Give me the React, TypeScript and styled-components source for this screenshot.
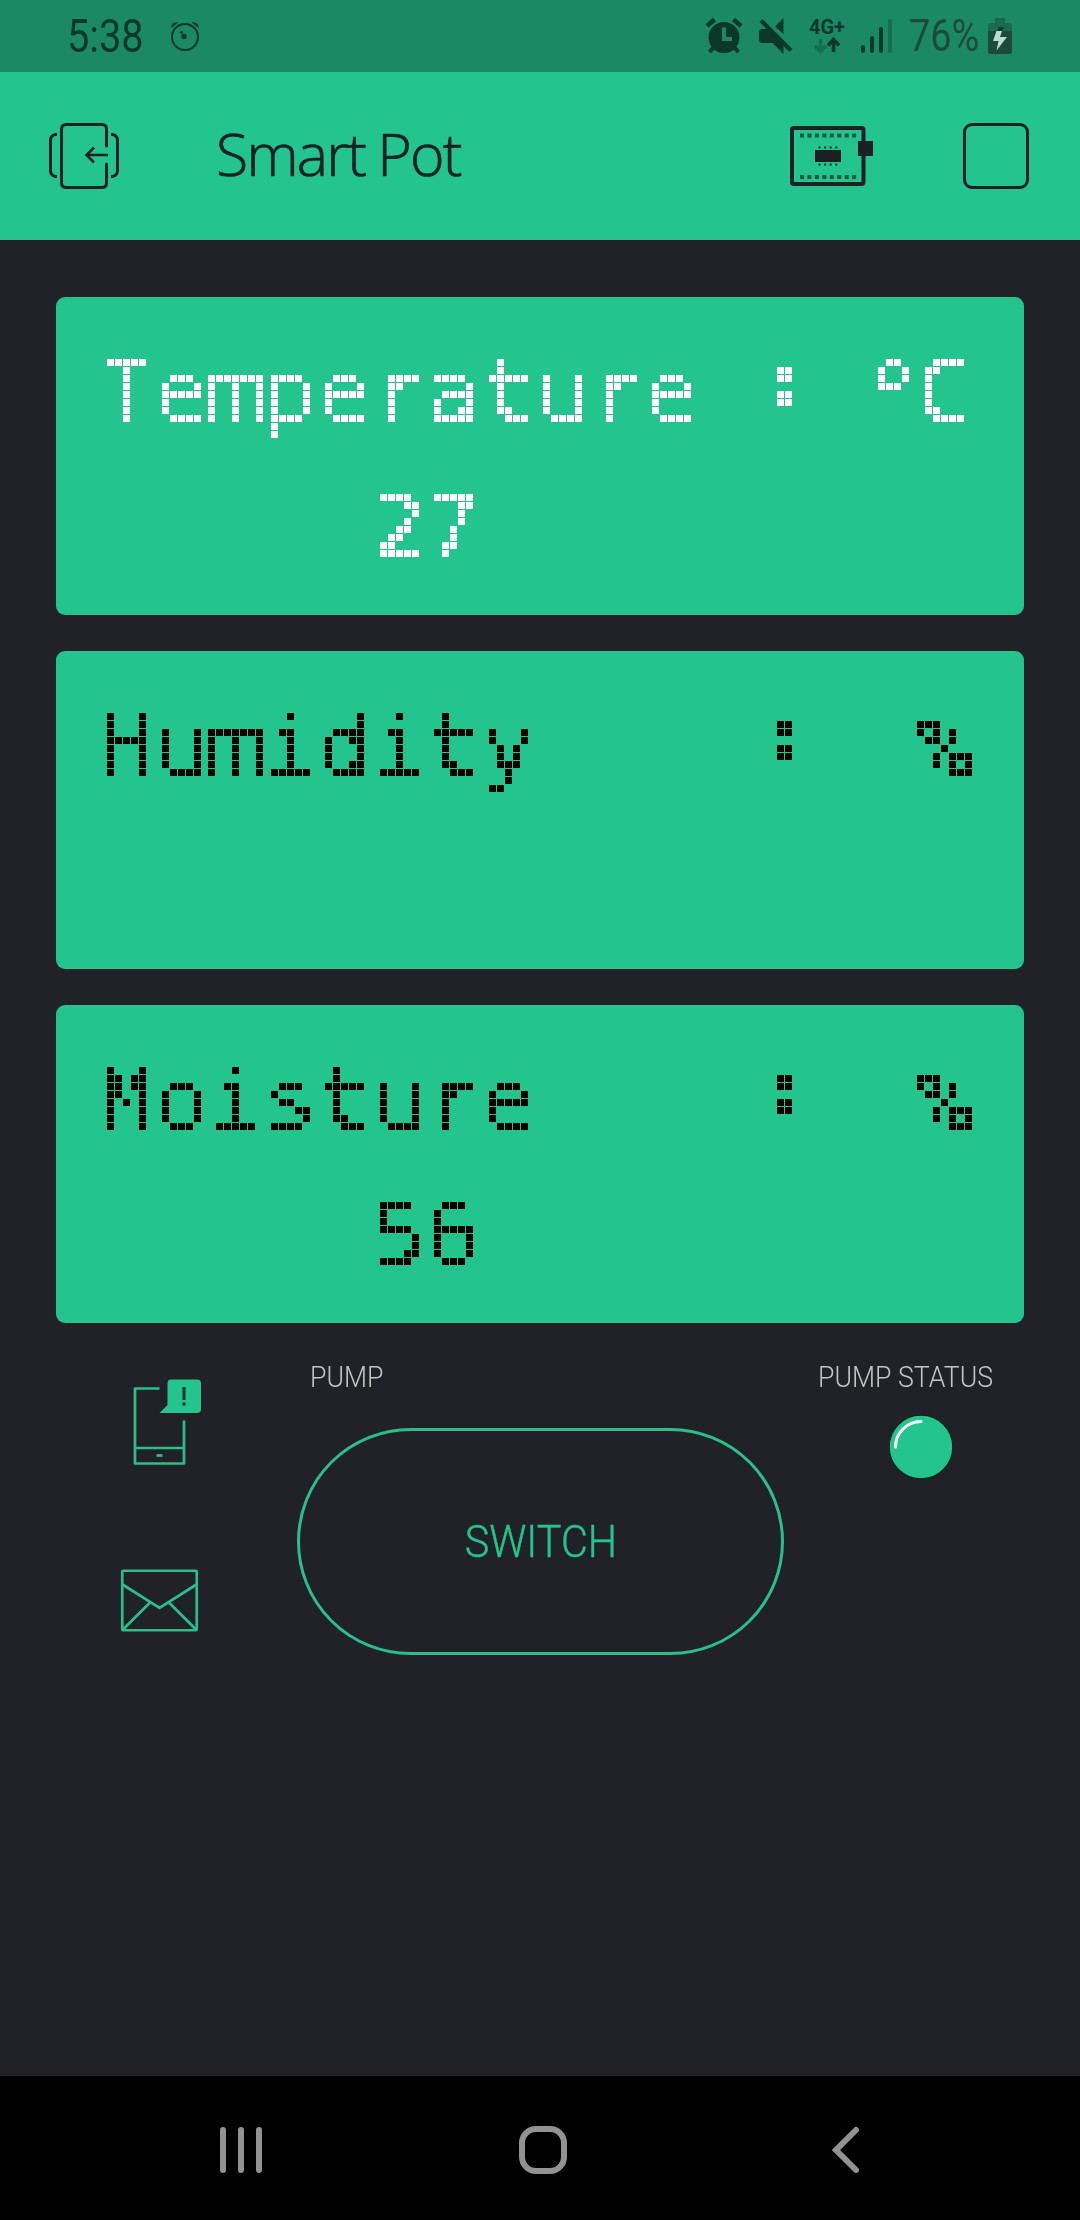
import React from "react";
import styled, { createGlobalStyle } from "styled-components";

const ink = "#1a2023";
const statusInk = "#0b3829";
const green = "#24c48e";
const lineGreen = "#2cbd8d";
const navColor = "#929292";

const GlobalStyle = createGlobalStyle`
  * { box-sizing: border-box; }
  body { margin: 0; background: #212227; }
  svg { display: block; flex: none; overflow: visible; }
`;

const Screen = styled.div`
  width: 1080px;
  height: 2220px;
  display: flex;
  flex-direction: column;
  background: #212227;
  overflow: hidden;
  font-family: Roboto, "Open Sans", sans-serif;
`;

const StatusBar = styled.header`
  height: 72px;
  flex: none;
  display: flex;
  align-items: center;
  padding: 0 68px 0 67px;
  background: #1b8a64;
`;

const Clock = styled.span`
  width: 103px;
  font-size: 46px;
  line-height: 72px;
  color: ${statusInk};
  transform: scaleX(0.865);
  transform-origin: left center;
  white-space: nowrap;
`;

const StatusIcons = styled.div`
  display: flex;
  align-items: center;
  margin-left: auto;
`;

const AlarmSlot = styled.div`
  margin-right: 16px;
`;

const Network = styled.div`
  display: flex;
  flex-direction: column;
  align-items: center;
  width: 36px;
  height: 38px;
  margin: 0 16px 0 16px;
`;

const NetworkLabel = styled.span`
  font-size: 20px;
  font-weight: 700;
  line-height: 20px;
  color: ${statusInk};
`;

const Percent = styled.span`
  width: 79px;
  margin-left: 17px;
  font-size: 44px;
  font-weight: 400;
  line-height: 72px;
  color: #1e4a3b;
  transform: scaleX(0.86);
  transform-origin: left center;
`;

const TitleBar = styled.div`
  height: 168px;
  flex: none;
  display: flex;
  align-items: center;
  padding: 0 51px 0 48px;
  background: ${green};
`;

const Title = styled.h1`
  flex: 1;
  margin: 0 0 6px 96px;
  font-family: "Open Sans", "Noto Sans", sans-serif;
  font-size: 59px;
  font-weight: 300;
  line-height: 80px;
  letter-spacing: -1.8px;
  word-spacing: -1.5px;
  -webkit-text-stroke: 0.7px ${ink};
  color: ${ink};
`;

const TitleActions = styled.div`
  display: flex;
  align-items: center;
  gap: 90px;
`;

const Panels = styled.main`
  display: flex;
  flex-direction: column;
  gap: 36px;
  padding: 57px 56px 0;
`;

const Lcd = styled.section<{ $ink: string }>`
  height: 318px;
  padding: 42px 0 0 44px;
  border-radius: 9px;
  background: ${green};
  color: ${(p) => p.$ink};
`;

const LcdLine = styled.div`
  height: 135px;
  font-family: "DejaVu Sans Mono", monospace;
  font-size: 87px;
  line-height: 106px;
  white-space: pre;
`;

const LcdCell = styled.span<{ $wide: boolean }>`
  display: inline-block;
  vertical-align: top;
  width: 55px;
  height: 106px;
  filter: url(${(p) => (p.$wide ? "#lcd-dots-wide" : "#lcd-dots")});

  &:nth-child(even) {
    width: 54px;
  }
`;

const LcdGlyph = styled.span<{ $adjust: string }>`
  display: inline-block;
  vertical-align: top;
  transform: ${(p) => p.$adjust};
  transform-origin: 26px 61px;
`;

const ColonGlyph = styled(LcdGlyph)`
  -webkit-text-stroke: 4px currentColor;
`;

const PercentGlyph = styled(LcdGlyph)`
  font-family: Roboto, sans-serif;
  font-size: 80px;
  font-weight: 500;
`;

const Controls = styled.div`
  display: flex;
  align-items: flex-start;
  height: 753px;
`;

const Actions = styled.div`
  display: flex;
  flex-direction: column;
  gap: 104px;
  width: 297px;
  padding: 56px 0 0 120px;
`;

const PumpColumn = styled.div`
  width: 487px;
  padding-top: 34px;
`;

const StatusColumn = styled.div`
  flex: 1;
  display: flex;
  flex-direction: column;
  padding: 34px 0 0 34px;
`;

const Label = styled.div<{ $indent: number }>`
  height: 40px;
  margin-left: ${(p) => p.$indent}px;
  font-size: 29px;
  font-weight: 300;
  line-height: 40px;
  color: #c4c4c6;
  white-space: nowrap;
  transform: scaleX(0.92);
  transform-origin: left center;
`;

const SwitchButton = styled.button`
  display: flex;
  align-items: center;
  justify-content: center;
  width: 487px;
  height: 227px;
  margin: 31px 0 0;
  padding: 0;
  border: 3px solid ${lineGreen};
  border-radius: 114px;
  background: transparent;
  font-family: Roboto, sans-serif;
  font-size: 45px;
  font-weight: 300;
  color: ${green};
`;

const SwitchText = styled.span`
  transform: scaleX(0.92);
  -webkit-text-stroke: 0.4px ${green};
`;

const Led = styled.div`
  margin: 17px 0 0 70px;
`;

const NavBar = styled.nav`
  flex: none;
  height: 144px;
  display: flex;
  align-items: center;
  padding: 4px 0 0 219px;
  background: #000;
`;

const HomeSlot = styled.div`
  margin: 0 265px 0 256px;
`;

/* Turns glyphs into 7px dots on an 8px grid. */
const DotFilter = ({ id, x, width }: { id: string; x: number; width: number }) => (
  <filter id={id} filterUnits="userSpaceOnUse" x={x} y="0" width={width} height="106" colorInterpolationFilters="sRGB">
    <feFlood x={x + 4} y="7" width="1" height="1" floodColor="#000" result="dot" />
    <feOffset in="dot" dx="0" dy="0" x={x} y="0" width="8" height="8" />
    <feTile result="grid" />
    <feOffset in="SourceGraphic" dx="0" dy="1" result="shifted" />
    <feMerge result="thick">
      <feMergeNode in="shifted" />
      <feMergeNode in="SourceGraphic" />
    </feMerge>
    <feComposite in="thick" in2="grid" operator="in" />
    <feComponentTransfer>
      <feFuncA type="discrete" tableValues="0 0 1 1 1" />
    </feComponentTransfer>
    <feMorphology operator="dilate" radius="3" />
  </filter>
);

const SmallAlarm = () => (
  <svg width="30" height="32" viewBox="0 0 30 32">
    <circle cx="15" cy="17" r="13" fill="none" stroke={statusInk} strokeWidth="2" />
    <path d="M1.500 8q-1-6 7-6zM28.500 8q1-6-7-6z" fill={statusInk} />
    <circle cx="14" cy="16.500" r="2.700" fill={statusInk} />
    <circle cx="11.500" cy="12.300" r="1.600" fill={statusInk} />
  </svg>
);

const Alarm = () => (
  <svg width="38" height="36" viewBox="0 0 38 36">
    <circle cx="19" cy="19.500" r="15.500" fill={statusInk} />
    <path d="M2 8l7.500-6.500M36 8l-7.500-6.500" stroke={statusInk} strokeWidth="4.500" />
    <path d="M8.500 29.500l-4 4.500M29.500 29.500l4 4.500" stroke={statusInk} strokeWidth="4" />
    <path d="M19 9.500v11.500h8" fill="none" stroke="#1b8a64" strokeWidth="4" />
  </svg>
);

const Muted = () => (
  <svg width="34" height="36" viewBox="0 0 34 36">
    <path d="M16 8.500L24.500 0v16zM3 11h7L24.500 25v11L13.500 25H3q-3 0-3-3v-8q0-3 3-3z" fill={statusInk} />
    <path d="M2 2.500L32 32.500" stroke={statusInk} strokeWidth="4.300" />
  </svg>
);

const DataArrows = () => (
  <svg width="26" height="17" viewBox="0 0 26 17">
    <path d="M6.500 2v12M1 8.500l5.500 6 5.500-6" fill="none" stroke="#13704f" strokeWidth="3.600" />
    <path d="M19.500 15V3M14 8.500l5.500-6 5.500 6" fill="none" stroke={statusInk} strokeWidth="3.600" />
  </svg>
);

const Signal = () => (
  <svg width="31" height="34" viewBox="0 0 31 34" strokeWidth="4" strokeLinecap="round">
    <path d="M2 28v4M11 19v13M20 10v22" stroke={statusInk} />
    <path d="M29 2v30" stroke="#13704f" />
  </svg>
);

const Battery = () => (
  <svg width="24" height="36" viewBox="0 0 24 36">
    <path d="M7 0h10v5h5q2 0 2 2v6H0V7q0-2 2-2h5z" fill="#1b6a50" />
    <path d="M0 13h24v21q0 2-2 2H2q-2 0-2-2z" fill="#1e4a3b" />
    <path d="M11 9h5l-2 4H9z" fill="#0b3d2c" />
    <path d="M8.500 13h5.500l-2 6h7L8.500 32.500l2-9.500H5z" fill="#b8dccf" />
  </svg>
);

const ExitIcon = () => (
  <svg width="72" height="66" viewBox="0 0 72 66" fill="none" stroke={ink} strokeWidth="3">
    <path d="M58.500 23V6q0-4.500-4.500-4.500H18.500Q13.500 1.500 13.500 6v54q0 4.500 5 4.500H54q4.500 0 4.500-4.500V41" strokeLinecap="round" />
    <path d="M9 11.500H7.500q-5 1-5 6v30q0 5 5 6H9M63 11.500h1.500q5 1 5 6v30q0 5-5 6H63" />
    <path d="M60 32H39M46 24.500L38.500 32l7.500 7.500" strokeWidth="2.500" />
  </svg>
);

const BoardIcon = () => {
  const pins = [0, 1, 2, 3, 4, 5, 6, 7];
  return (
    <svg width="83" height="60" viewBox="0 0 83 60">
      <rect x="2" y="2" width="71.500" height="56" rx="2" fill="none" stroke={ink} strokeWidth="4" />
      {pins.map((i) => (
        <g key={i} fill="#15573f">
          <rect x={10 + i * 7.45} y="7.500" width="4" height="4" />
          <rect x={10 + i * 7.45} y="49" width="4" height="4" />
        </g>
      ))}
      {pins.slice(0, 4).map((i) => (
        <g key={i} fill={ink}>
          <rect x={28.5 + i * 5.6} y="20.500" width="2" height="2" />
          <rect x={28.5 + i * 5.6} y="37.500" width="2" height="2" />
        </g>
      ))}
      <rect x="25" y="24" width="26" height="12" fill={ink} />
      <rect x="68" y="15" width="15" height="15" fill={ink} />
    </svg>
  );
};

const StopIcon = () => (
  <svg width="66" height="66" viewBox="0 0 66 66">
    <rect x="1.500" y="1.500" width="63" height="63" rx="7.500" fill="none" stroke={ink} strokeWidth="3" />
  </svg>
);

const NotifyIcon = () => (
  <svg width="81" height="86" viewBox="0 0 81 86">
    <g fill="none" stroke={lineGreen} strokeWidth="2.700">
      <path d="M39.500 9.500H15v75h49V41.500M15 69h49" strokeLinejoin="round" />
      <path d="M36.500 76.500h6" />
    </g>
    <path d="M51 0.500h26q4 0 4 4v25.500q0 4-4 4H39.500l8-8V4.500q0-4 3.500-4z" fill={green} />
    <path d="M64 8v13M64 23.500v3" stroke="#0b3326" strokeWidth="3" />
  </svg>
);

const MailIcon = () => (
  <svg width="78" height="63" viewBox="0 0 78 63" fill="none" stroke={lineGreen} strokeWidth="2.700">
    <rect x="2.250" y="1.750" width="74.500" height="59.500" rx="1" />
    <path d="M2.500 15.500L39.500 39l37-23.500M30 33.500L3 60.500M49 33.500l27 27" />
  </svg>
);

const LedIcon = () => (
  <svg width="66" height="66" viewBox="0 0 66 66">
    <circle cx="33" cy="33" r="31.800" fill={green} stroke="#0f241f" strokeWidth="1.200" />
    <path d="M7.500 33A25.500 25.500 0 0 1 33 7.500" fill="none" stroke="#fff" strokeWidth="3" strokeLinecap="round" />
  </svg>
);

/* Fits glyph outlines to the dot columns and rows of a cell. */
const adjustments: Record<string, string> = {
  T: "scaleX(0.83)",
  m: "scaleX(1.45)",
  ":": "translate(4px, -14px) scale(1.05, 0.8)",
  "°": "translate(4px, 9px) scale(1.15)",
  "%": "translate(-3px, 3px)",
};

const glyphs: Record<string, typeof LcdGlyph> = {
  ":": ColonGlyph,
  "%": PercentGlyph,
};

const LcdText = ({ text }: { text: string }) => (
  <LcdLine>
    {[...text].map((char, i) => {
      const Glyph = glyphs[char] ?? LcdGlyph;
      return (
        <LcdCell key={i} $wide={char === "m" || char === "%"}>
          <Glyph $adjust={adjustments[char] ?? "none"}>{char}</Glyph>
        </LcdCell>
      );
    })}
  </LcdLine>
);

const readings = [
  { ink: "#fff", lines: ["Temperature : °C", "     27"] },
  { ink: "#000", lines: ["Humidity    :  %"] },
  { ink: "#000", lines: ["Moisture    :  %", "     56"] },
];

export default function App() {
  return (
    <Screen>
      <GlobalStyle />
      <svg width="0" height="0" aria-hidden="true">
        <DotFilter id="lcd-dots" x={6} width={40} />
        <DotFilter id="lcd-dots-wide" x={-2} width={56} />
      </svg>
      <StatusBar>
        <Clock>5:38</Clock>
        <SmallAlarm />
        <StatusIcons>
          <AlarmSlot>
            <Alarm />
          </AlarmSlot>
          <Muted />
          <Network>
            <NetworkLabel>4G+</NetworkLabel>
            <DataArrows />
          </Network>
          <Signal />
          <Percent>76%</Percent>
          <Battery />
        </StatusIcons>
      </StatusBar>
      <TitleBar>
        <ExitIcon />
        <Title>Smart Pot</Title>
        <TitleActions>
          <BoardIcon />
          <StopIcon />
        </TitleActions>
      </TitleBar>
      <Panels>
        {readings.map((r) => (
          <Lcd key={r.lines[0]} $ink={r.ink}>
            {r.lines.map((line) => (
              <LcdText key={line} text={line} />
            ))}
          </Lcd>
        ))}
      </Panels>
      <Controls>
        <Actions>
          <NotifyIcon />
          <MailIcon />
        </Actions>
        <PumpColumn>
          <Label $indent={13}>PUMP</Label>
          <SwitchButton>
            <SwitchText>SWITCH</SwitchText>
          </SwitchButton>
        </PumpColumn>
        <StatusColumn>
          <Label $indent={0}>PUMP STATUS</Label>
          <Led>
            <LedIcon />
          </Led>
        </StatusColumn>
      </Controls>
      <NavBar>
        <svg width="44" height="46" viewBox="0 0 44 46" stroke={navColor} strokeWidth="6" strokeLinecap="round">
          <path d="M4 3v40M22 3v40M40 3v40" />
        </svg>
        <HomeSlot>
          <svg width="48" height="48" viewBox="0 0 48 48">
            <rect x="3" y="3" width="42" height="42" rx="14" fill="none" stroke={navColor} strokeWidth="6" />
          </svg>
        </HomeSlot>
        <svg width="27" height="46" viewBox="0 0 27 46">
          <path d="M24 3L4 23l20 20" fill="none" stroke={navColor} strokeWidth="6" strokeLinecap="round" />
        </svg>
      </NavBar>
    </Screen>
  );
}
